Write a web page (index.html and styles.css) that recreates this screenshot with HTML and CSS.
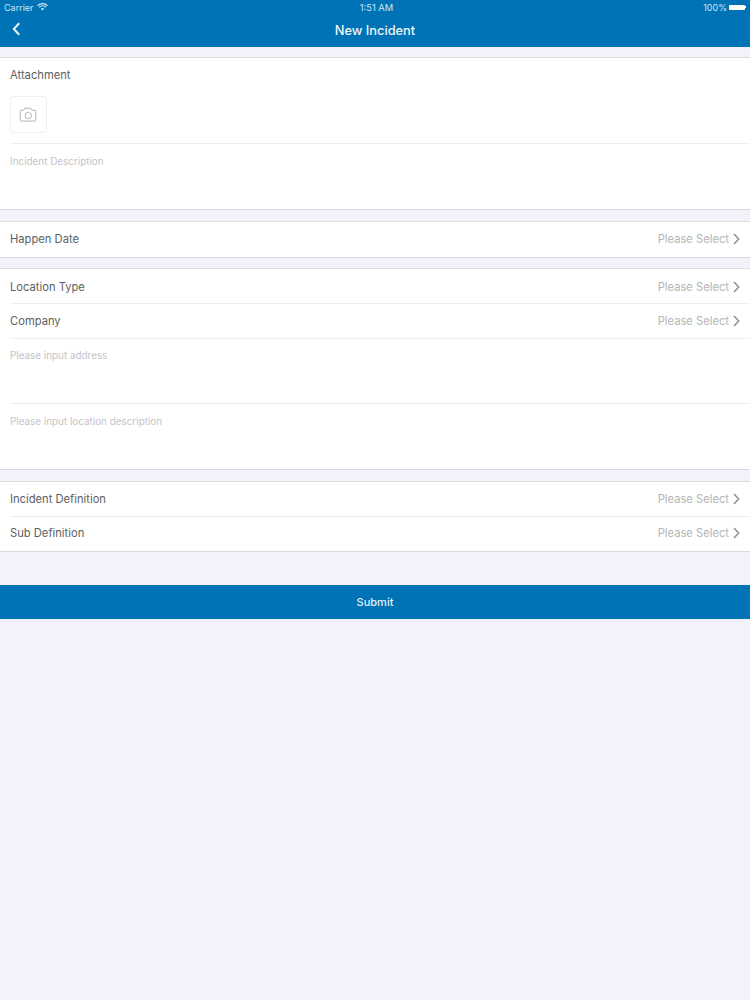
FILE: index.html
```html
<!DOCTYPE html>
<html lang="en">
<head>
<meta charset="utf-8">
<title>New Incident</title>
<link rel="stylesheet" href="styles.css">
</head>
<body>
<header class="nav">
  <div class="status">
    <div class="status-left"><span>Carrier</span>
      <svg class="wifi" width="11" height="8" viewBox="0 0 11 8"><path d="M.6 2.7a7 7 0 0 1 9.8 0M2.2 4.3a4.7 4.7 0 0 1 6.6 0" fill="none" stroke="#cfe6f5" stroke-width="1.2"/><path d="M3.9 5.7a2.3 2.3 0 0 1 3.2 0L5.5 7.5z" fill="#cfe6f5"/></svg>
    </div>
    <div class="status-time">1:51 AM</div>
    <div class="status-right"><span>100%</span><span class="battery"></span><span class="battery-tip"></span></div>
  </div>
  <div class="titlebar">
    <svg class="back" width="9" height="14" viewBox="0 0 9 14"><path d="M7.2 1.2 1.8 7l5.4 5.8" fill="none" stroke="#e8f3fa" stroke-width="2"/></svg>
    <h1 class="title">New Incident</h1>
  </div>
</header>

<main class="form">
  <section class="group">
    <div class="attach">
      <div class="label attach-label">Attachment</div>
      <div class="photo">
        <svg width="19" height="15" viewBox="0 0 19 15"><path d="M2 3.300h2.500l1.200-2.100h6.100l1.200 2.100h3a.8.8 0 0 1 .8.8v9.200a.8.8 0 0 1-.8.8H2a.8.8 0 0 1-.8-.8V4.100a.8.8 0 0 1 .8-.8z" fill="none" stroke="#b3b5b8" stroke-width="1"/><circle cx="9.300" cy="8.500" r="3.200" fill="none" stroke="#b3b5b8" stroke-width="1"/></svg>
      </div>
    </div>
    <div class="textarea">Incident Description</div>
  </section>

  <section class="group group-tight">
    <div class="row row-single"><span class="label">Happen Date</span><span class="value">Please Select</span><svg class="chev" width="7" height="12" viewBox="0 0 7 12"><path d="M1 1l4.700 5L1 11" fill="none" stroke="#8a8a8a" stroke-width="1.400"/></svg></div>
  </section>

  <section class="group">
    <div class="row row-div row-first"><span class="label">Location Type</span><span class="value">Please Select</span><svg class="chev" width="7" height="12" viewBox="0 0 7 12"><path d="M1 1l4.700 5L1 11" fill="none" stroke="#8a8a8a" stroke-width="1.400"/></svg></div>
    <div class="row row-div"><span class="label">Company</span><span class="value">Please Select</span><svg class="chev" width="7" height="12" viewBox="0 0 7 12"><path d="M1 1l4.700 5L1 11" fill="none" stroke="#8a8a8a" stroke-width="1.400"/></svg></div>
    <div class="textarea textarea-div">Please input address</div>
    <div class="textarea">Please input location description</div>
  </section>

  <section class="group">
    <div class="row row-div"><span class="label">Incident Definition</span><span class="value">Please Select</span><svg class="chev" width="7" height="12" viewBox="0 0 7 12"><path d="M1 1l4.700 5L1 11" fill="none" stroke="#8a8a8a" stroke-width="1.400"/></svg></div>
    <div class="row row-last"><span class="label">Sub Definition</span><span class="value">Please Select</span><svg class="chev" width="7" height="12" viewBox="0 0 7 12"><path d="M1 1l4.700 5L1 11" fill="none" stroke="#8a8a8a" stroke-width="1.400"/></svg></div>
  </section>

  <button class="submit" type="button">Submit</button>
</main>
</body>
</html>
```
FILE: styles.css
```css
* { box-sizing: border-box; }
html, body { margin: 0; padding: 0; }
body {
  min-height: 1000px;
  background: #f3f2fa;
  font-family: "Inter", "Liberation Sans", sans-serif;
  color: #55585b;
}
.nav {
  height: 47px;
  background: #0073b6;
  color: #fff;
}
.status {
  height: 14px;
  padding: 0 4px;
  display: flex;
  justify-content: space-between;
  align-items: center;
  font-size: 9px;
  color: #cfe6f5;
  position: relative;
}
.status-left, .status-right { display: flex; align-items: center; gap: 3px; }
.status-time { position: absolute; left: 0; right: 0; text-align: center; font-size: 9.300px; padding-left: 3px; }
.battery { width: 16px; height: 5px; background: #fff; margin-left: -1px; border-radius: 1px; }
.battery-tip { width: 1px; height: 2px; background: #fff; margin-left: -3px; }
.titlebar {
  height: 33px;
  display: flex;
  align-items: center;
  justify-content: center;
  position: relative;
}
.back { position: absolute; left: 12px; top: 8px; }
.title { margin: 0; font-size: 12.800px; font-weight: 500; color: #eef6fb; }
.form { padding-top: 10px; }
.group {
  background: #fff;
  border-top: 1px solid #dcdde0;
  border-bottom: 1px solid #d8d9dc;
  margin-bottom: 11px;
}
.group-tight { margin-bottom: 10px; }
.attach { height: 86px; margin-left: 10px; border-bottom: 1px solid #eeeeef; }
.attach-label { display: block; padding-top: 10px; line-height: 15px; }
.photo {
  width: 37px;
  height: 37px;
  margin-top: 13px;
  border: 1px solid #efeff1;
  border-radius: 4px;
  display: flex;
  align-items: center;
  justify-content: center;
}
.label { font-size: 11.200px; color: #5c5f62; }
.value { font-size: 11.200px; color: #b4b5b8; margin-left: auto; }
.row {
  height: 35px;
  padding: 0 10px;
  display: flex;
  align-items: center;
  position: relative;
}
.row-single { padding-bottom: 1px; }
.row-div { padding-bottom: 1px; }
.row-first { padding-bottom: 0; }
.row-last { height: 34px; padding-bottom: 2px; }
.row-div::after, .textarea-div::after {
  content: "";
  position: absolute;
  left: 10px;
  right: 0;
  bottom: 0;
  height: 1px;
  background: #eeeeef;
}
.chev { margin-left: 4px; }
.textarea {
  height: 65px;
  padding: 11px 10px 0;
  font-size: 9.900px;
  line-height: 13px;
  color: #c3c4c7;
  position: relative;
}
.textarea-div { padding-top: 10px; }
.submit {
  display: block;
  width: 100%;
  height: 34px;
  margin-top: 33px;
  border: 0;
  padding: 0;
  background: #0073b6;
  color: #e3f0f8;
  font: 500 11px "Inter", "Liberation Sans", sans-serif;
}
```
